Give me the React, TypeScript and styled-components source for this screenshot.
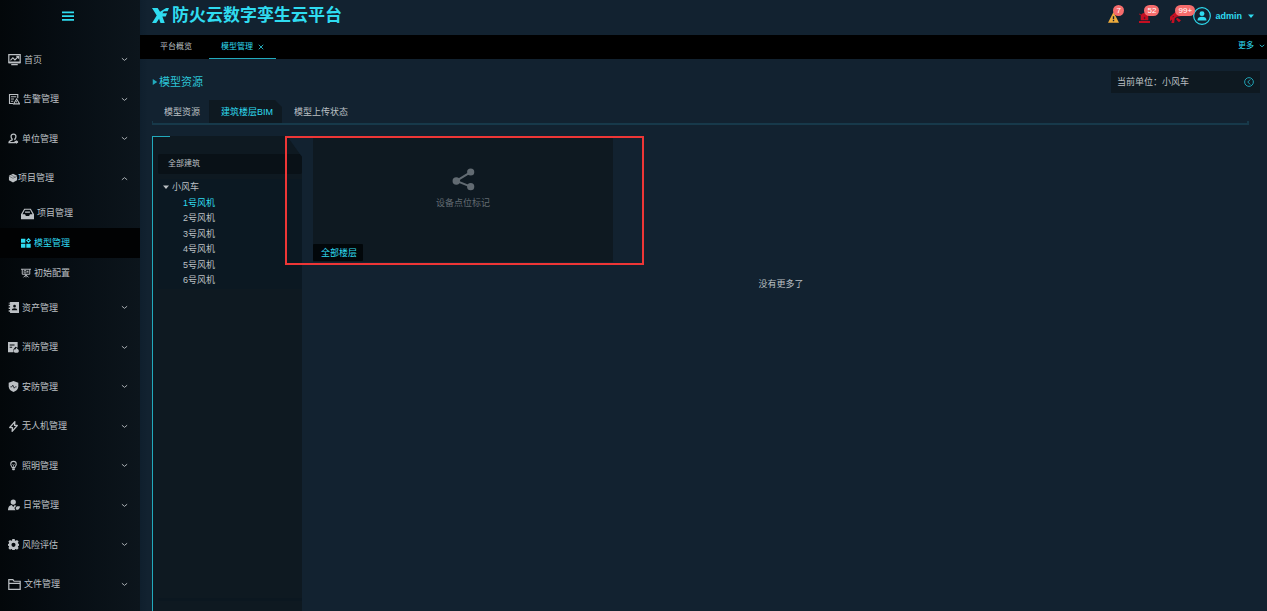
import React from "react";
import styled, { createGlobalStyle, css } from "styled-components";

const color = {
  page: "#122230",
  bar: "#000000",
  panel: "#0e1921",
  cyan: "#2fdcf0",
  cyanDim: "#22aabc",
  line: "#17394a",
  text: "#bcc0c4",
  muted: "#626b72",
  badge: "#f56c6c",
};

const GlobalStyle = createGlobalStyle`
  * { box-sizing: border-box; }
  body {
    margin: 0;
    background: ${color.page};
    color: ${color.text};
    font-family: "Liberation Sans", "Noto Sans CJK SC", sans-serif;
    font-size: 9px;
    line-height: 16px;
  }
  ul { list-style: none; margin: 0; padding: 0; }
  h1, h2, p { margin: 0; }
  button {
    border: 0;
    padding: 0;
    margin: 0;
    background: none;
    color: inherit;
    font: inherit;
    text-align: left;
    cursor: pointer;
    white-space: nowrap;
  }
  svg { display: block; flex: none; }
`;

/* ---------- icons ---------- */

type IconName = keyof typeof shapes;

const shapes = {
  monitor: (
    <>
      <path d="M1 2h14v10H1z" fill="none" stroke="currentColor" strokeWidth="1.5" />
      <path d="M3 9l3-3 2.500 2.500L13 4M10 4h3v3" fill="none" stroke="currentColor" strokeWidth="1.400" />
      <path d="M1 10.500h14v2H1zM4 13.500h8v1.500H4z" />
    </>
  ),
  alarmDoc: (
    <>
      <path d="M13 7V2H2v12h5" fill="none" stroke="currentColor" strokeWidth="1.500" />
      <path d="M4 5h7M4 8h4M4 11h3" fill="none" stroke="currentColor" strokeWidth="1.300" />
      <path d="M11.500 8l4 6.500h-8z" fill="none" stroke="currentColor" strokeWidth="1.400" />
      <path d="M11 10.500h1v2h-1z" />
    </>
  ),
  person: (
    <>
      <path
        d="M8 1.500c-2.500 0-3.700 1.800-3.500 4 .1 1.600.8 2.600 1.500 3.300v1.200c-2.500.8-4.500 1.800-4.500 4h9M8 1.500c2.500 0 3.700 1.800 3.500 4-.1 1.600-.8 2.600-1.500 3.300v1.200"
        fill="none"
        stroke="currentColor"
        strokeWidth="1.900"
      />
      <path d="M12 10l1 1.500 2-.2-.9 1.700.9 1.700-2-.2-1 1.500-1-1.500-2 .2.900-1.700-.9-1.700 2 .2z" />
    </>
  ),
  cube: (
    <>
      <path d="M8 1l6.500 3.500v7L8 15l-6.500-3.500v-7z" />
      <path d="M1.500 5L8 8.500 14.500 5M4 2.500l8 4.500" fill="none" stroke="#060c11" strokeWidth=".6" />
    </>
  ),
  inbox: (
    <path
      fillRule="evenodd"
      d="M4 2h8l4 7v6H0V9zM4.800 3.500L1.800 9H5l1 2h4l1-2h3.200l-3-5.500zM5 5.500h6V7H5z"
    />
  ),
  blocks: (
    <>
      <path d="M0 1h7v6.500H0zM0 9h7v6.500H0zM8.500 9h7v6.500h-7z" />
      <path d="M12 1.200L14.800 4 12 6.800 9.200 4z" fill="none" stroke="currentColor" strokeWidth="1.700" />
    </>
  ),
  board: (
    <>
      <path d="M0 2h16M2 2v8h12V2M8 10v5M4 15l4-4 4 4" fill="none" stroke="currentColor" strokeWidth="1.500" />
      <path d="M5 4v4M5 4h3v4H5M11 4v4M9.500 5.500h2" fill="none" stroke="currentColor" strokeWidth="1.200" />
    </>
  ),
  contact: (
    <path
      fillRule="evenodd"
      d="M3 0h13v16H3v-2H1v-2h2v-2H1V8h2V6H1V4h2V2H1V1h2zM9.500 4a2 2 0 1 0 0 4 2 2 0 0 0 0-4zM5.500 12h8c0-2-1.500-3-4-3s-4 1-4 3z"
    />
  ),
  fireDoc: (
    <>
      <path fillRule="evenodd" d="M0 0h14v8.500L11 7l-3 3.500V15H0zM2.500 3.500V5h7V3.500zM2.500 7v1.500H6V7z" />
      <path d="M12 8c.5 1.500 3.800 2.500 3.800 5 0 1.800-1.600 2.800-3.800 2.800s-3.700-1-3.700-2.800c0-1.500 1-2 1.500-3l1 1z" />
    </>
  ),
  shield: (
    <>
      <path d="M8 0l7 2.500V8c0 4-3 6.500-7 8-4-1.500-7-4-7-8V2.500z" />
      <path d="M3.500 8.500h2L7 6l2 4.500 1.500-2h2" fill="none" stroke="#0a1016" strokeWidth="1.100" />
    </>
  ),
  bolt: (
    <path
      d="M10 1L2.500 9.500h4L6 15l7.500-8.500h-4z"
      fill="none"
      stroke="currentColor"
      strokeWidth="1.900"
      strokeLinejoin="round"
    />
  ),
  bulb: (
    <>
      <path d="M6 11c0-1.500-2-2.500-2-5a4 4 0 0 1 8 0c0 2.500-2 3.500-2 5z" fill="none" stroke="currentColor" strokeWidth="1.500" />
      <path d="M6.500 6L8 8l1.500-2M8 8v3" fill="none" stroke="currentColor" />
      <path d="M6 12h4v2l-1 1H7l-1-1z" />
    </>
  ),
  worker: (
    <>
      <circle cx="7" cy="4" r="3.500" />
      <path d="M0 15c0-4 1.500-6.500 5-7l2 2.500L9 8l2 1-2.500 3L10 15z" />
      <path d="M10 12c1.500-3 4-2.500 6-2-.3 3-2 4.500-4.500 4.500z" />
    </>
  ),
  gear: (
    <path
      fillRule="evenodd"
      d="M6.300 0h3.400l.4 2.100 1.200.5 1.800-1.200 2.400 2.400-1.200 1.800.5 1.200 2.100.4v2.600l-2.100.4-.5 1.200 1.200 1.800-2.400 2.400-1.800-1.200-1.200.5-.4 2.100H6.300l-.4-2.100-1.200-.5-1.800 1.200L.5 13.200l1.200-1.800-.5-1.200L0 9.800V7.200l1.200-.4.5-1.200L.5 3.800l2.400-2.400 1.800 1.200 1.200-.5zM8 5.500a3 3 0 1 0 0 6 3 3 0 0 0 0-6z"
    />
  ),
  folder: (
    <path d="M1 2h5l1.500 2H15v10H1zM1 6.500h14" fill="none" stroke="currentColor" strokeWidth="1.500" />
  ),
  share: (
    <>
      <circle cx="3" cy="9" r="2.600" />
      <circle cx="13" cy="2.800" r="2.500" />
      <circle cx="13" cy="13" r="2.500" />
      <path d="M3 9l10-6.200M3 9l10 4" stroke="currentColor" strokeWidth="1.400" />
    </>
  ),
  warning: (
    <path fillRule="evenodd" d="M8 0l8 15.500H0zM7 6v4.500h2V6zM7 11.500v2h2v-2z" />
  ),
  siren: (
    <path
      fillRule="evenodd"
      d="M2.500 12V7a5.500 5.500 0 0 1 11 0v5zM0 13h16v3H0zM8 6.500L6.500 9H8v2l1.700-2.800H8zM0 3l1-1 2 2-1 1zM13 4l2-2 1 1-2 2z"
    />
  ),
  extinguisher: (
    <path
      fillRule="evenodd"
      d="M0 7l8-7 8 2-1 4-5 1-3 2-1 7H2l1-5-3 2zM4 6v2l2-1.500zM10 8l6 4-3 3-4-4z"
    />
  ),
  chevron: <path d="M2 5l6 5 6-5" fill="none" stroke="currentColor" strokeWidth="2" />,
  caret: <path d="M0 4h16l-8 9z" />,
  triangle: <path d="M2 0l12 8-12 8z" />,
  cross: <path d="M2 2l12 12M14 2L2 14" stroke="currentColor" strokeWidth="2" />,
  collapse: (
    <>
      <circle cx="8" cy="8" r="7" fill="none" stroke="currentColor" strokeWidth="1.500" />
      <path d="M10 4L6 8l4 4" fill="none" stroke="currentColor" strokeWidth="1.500" />
    </>
  ),
  user: (
    <>
      <circle cx="8" cy="8" r="7.400" fill="none" stroke="currentColor" strokeWidth="1" />
      <circle cx="8" cy="5.900" r="2.200" />
      <path d="M4 12c0-2.500 1.500-3.300 4-3.300s4 .8 4 3.300z" />
    </>
  ),
  menu: <path d="M0 2h16v2.200H0zM0 7h16v2.200H0zM0 12h16v2.200H0z" />,
  logo: (
    <>
      <path d="M0 0h6l2.500 4L15 0h3l-1.500 3.500h-4L11 5.500h5L14.500 9H11l2.500 7H9L7.500 11.500 4.500 16H0l5-8z" />
    </>
  ),
};

const Icon = ({ name, size, flip }: { name: IconName; size: number; flip?: boolean }) => (
  <svg
    width={size}
    height={size}
    viewBox={name === "logo" ? "0 0 18 16" : "0 0 16 16"}
    fill="currentColor"
    aria-hidden="true"
  >
    <g transform={flip ? "rotate(180 8 8)" : undefined}>{shapes[name]}</g>
  </svg>
);

/* ---------- side menu ---------- */

const Shell = styled.div`
  display: grid;
  grid-template-columns: 140px minmax(0, 1fr);
  min-height: 100vh;
`;

const Sidebar = styled.nav`
  background: linear-gradient(90deg, #03070a 0%, #070e14 50%, #0c151c 100%);
`;

const MenuToggle = styled.button`
  display: flex;
  align-items: center;
  justify-content: center;
  width: 136px;
  height: 32px;
  margin-bottom: 8px;
  color: ${color.cyan};
`;

const MenuButton = styled.button<{ $tight?: boolean }>`
  display: flex;
  align-items: center;
  gap: ${(p) => (p.$tight ? 0 : 3)}px;
  width: 100%;
  height: 39px;
  padding: 0 12px 0 8px;
`;

const MenuItem = styled.li`
  &:nth-child(even) > ${MenuButton} {
    height: 40px;
  }
`;

const MenuLabel = styled.span`
  flex: 1;
`;

const SubButton = styled.button<{ $active?: boolean }>`
  display: flex;
  align-items: center;
  gap: 3px;
  width: 100%;
  height: 30px;
  padding-left: 21px;
  ${(p) =>
    p.$active &&
    css`
      background: #010203;
      color: ${color.cyan};
    `}
`;

type Entry = { label: string; icon: IconName; size: number; children?: Entry[] };

const menu: Entry[] = [
  { label: "首页", icon: "monitor", size: 13 },
  { label: "告警管理", icon: "alarmDoc", size: 12 },
  { label: "单位管理", icon: "person", size: 11 },
  {
    label: "项目管理",
    icon: "cube",
    size: 10,
    children: [
      { label: "项目管理", icon: "inbox", size: 13 },
      { label: "模型管理", icon: "blocks", size: 10 },
      { label: "初始配置", icon: "board", size: 10 },
    ],
  },
  { label: "资产管理", icon: "contact", size: 11 },
  { label: "消防管理", icon: "fireDoc", size: 11 },
  { label: "安防管理", icon: "shield", size: 11 },
  { label: "无人机管理", icon: "bolt", size: 11 },
  { label: "照明管理", icon: "bulb", size: 11 },
  { label: "日常管理", icon: "worker", size: 12 },
  { label: "风险评估", icon: "gear", size: 11 },
  { label: "文件管理", icon: "folder", size: 13 },
];

const SideMenu = () => (
  <Sidebar aria-label="主菜单">
    <MenuToggle aria-label="收起菜单">
      <Icon name="menu" size={12} />
    </MenuToggle>
    <ul>
      {menu.map((item) => (
        <MenuItem key={item.label}>
          <MenuButton $tight={!!item.children} aria-expanded={!!item.children}>
            <Icon name={item.icon} size={item.size} />
            <MenuLabel>{item.label}</MenuLabel>
            <Icon name="chevron" size={7} flip={!!item.children} />
          </MenuButton>
          {item.children && (
            <ul>
              {item.children.map((sub) => (
                <li key={sub.label}>
                  <SubButton $active={sub.label === "模型管理"}>
                    <Icon name={sub.icon} size={sub.size} />
                    {sub.label}
                  </SubButton>
                </li>
              ))}
            </ul>
          )}
        </MenuItem>
      ))}
    </ul>
  </Sidebar>
);

/* ---------- top bars ---------- */

const Page = styled.div`
  display: flex;
  flex-direction: column;
  min-width: 0;
  background: linear-gradient(90deg, #0f1f2d 0, ${color.page} 8px);
`;

const Header = styled.header`
  display: flex;
  align-items: center;
  justify-content: space-between;
  height: 35px;
  padding: 0 13px 4px 12px;
`;

const Brand = styled.div`
  display: flex;
  align-items: center;
  gap: 3px;
  color: ${color.cyan};
`;

const BrandName = styled.h1`
  font-size: 17px;
  line-height: 24px;
  font-weight: 700;
  white-space: nowrap;
`;

const HeaderTools = styled.div`
  display: flex;
  align-items: center;
  gap: 12px;
`;

const Notices = styled.div`
  display: flex;
  gap: 20px;
`;

const Notice = styled.button<{ $tint: string }>`
  position: relative;
  padding-top: 4px;
  color: ${(p) => p.$tint};
`;

const Badge = styled.span`
  position: absolute;
  left: 5px;
  top: -3px;
  min-width: 10px;
  height: 11px;
  padding: 0 3px;
  border-radius: 6px;
  background: ${color.badge};
  color: #fff;
  font-size: 8px;
  line-height: 11px;
  text-align: center;
`;

const UserButton = styled.button`
  display: flex;
  align-items: center;
  gap: 4px;
  color: ${color.cyan};
  font-weight: 700;
`;

const UserName = styled.span`
  margin-right: 2px;
`;

const TabBar = styled.nav`
  display: flex;
  align-items: stretch;
  height: 24px;
  padding: 0 2px 0 8px;
  background: ${color.bar};
  font-size: 8px;
`;

const PageTab = styled.button<{ $active?: boolean }>`
  display: flex;
  align-items: center;
  gap: 5px;
  padding: 0 12px;
  border-bottom: 1px solid transparent;
  ${(p) =>
    p.$active &&
    css`
      color: ${color.cyan};
      border-color: ${color.cyanDim};
    `}

  &:first-child {
    margin-right: 5px;
  }
`;

const More = styled.button`
  display: flex;
  align-items: center;
  gap: 5px;
  margin-left: auto;
  padding-bottom: 3px;
  color: ${color.cyan};
`;

/* ---------- content ---------- */

const Content = styled.main`
  display: flex;
  flex-direction: column;
  flex: 1;
  padding: 11px 7px 0 12px;
`;

const TitleRow = styled.div`
  display: flex;
  align-items: center;
  justify-content: space-between;
  height: 23px;
`;

const Title = styled.h2`
  display: flex;
  align-items: center;
  gap: 1px;
  color: ${color.cyanDim};
  font-size: 11px;
  font-weight: 400;
`;

const TitleText = styled.span`
  color: #2cc4d6;
`;

const UnitBox = styled.div`
  display: flex;
  align-items: center;
  justify-content: space-between;
  width: 149px;
  height: 22px;
  padding: 0 6px;
  background: ${color.panel};
`;

const Collapse = styled.button`
  color: ${color.cyanDim};
`;

const SubTabs = styled.div`
  display: flex;
  height: 32px;
  margin: 0 11px 11px 0;
  padding: 7px 0 2px;
  background:
    linear-gradient(${color.line}, ${color.line}) 0 100% / 1px 4px no-repeat,
    linear-gradient(${color.line}, ${color.line}) 100% 100% / 2px 4px no-repeat,
    linear-gradient(${color.line}, ${color.line}) 0 100% / 100% 2px no-repeat;
`;

const SubTab = styled.button<{ $active?: boolean }>`
  padding: 0 9px 0 12px;
  ${(p) =>
    p.$active &&
    css`
      background: ${color.panel};
      color: ${color.cyan};
      clip-path: polygon(0 0, calc(100% - 7px) 0, 100% 7px, 100% 100%, 0 100%);
    `}
`;

const Workspace = styled.div`
  display: flex;
  flex: 1;
  gap: 11px;
  margin-right: 11px;
`;

const Panel = styled.aside`
  display: flex;
  flex-direction: column;
  width: 150px;
  padding: 18px 0 10px 5px;
  border-left: 1px solid ${color.cyanDim};
  background:
    linear-gradient(${color.cyanDim}, ${color.cyanDim}) 0 0 / 17px 1px no-repeat,
    ${color.panel};
  clip-path: polygon(0 0, calc(100% - 15px) 0, 100% 21px, 100% 100%, 0 100%);
`;

const PanelHeading = styled.button`
  height: 20px;
  margin-bottom: 5px;
  padding-left: 10px;
  border-radius: 2px;
  background: #091117;
  font-size: 8px;
`;

const Tree = styled.div`
  padding-bottom: 1px;
  background: #0b1822;
`;

const TreeRoot = styled.button`
  display: flex;
  align-items: center;
  gap: 3px;
  width: 100%;
  padding-left: 5px;
`;

const TreeLeaf = styled.button<{ $active?: boolean }>`
  display: block;
  width: 100%;
  height: 16px;
  padding-left: 25px;
  color: ${(p) => (p.$active ? color.cyan : "inherit")};

  li:nth-child(odd) > & {
    height: 15px;
  }
`;

const PanelFoot = styled.div`
  height: 3px;
  margin-top: auto;
  background: #0b1720;
`;

const Gallery = styled.section`
  position: relative;
  flex: 1;
`;

const FloorCard = styled.article`
  position: relative;
  display: flex;
  flex-direction: column;
  align-items: center;
  width: 300px;
  height: 126px;
  padding-top: 32px;
  background: ${color.panel};
  color: ${color.muted};
`;

const CardCaption = styled.p`
  margin-top: 4px;
`;

const CardTag = styled.button`
  position: absolute;
  left: 0;
  bottom: 1px;
  height: 17px;
  padding: 0 6px 0 8px;
  border-radius: 1px;
  background: #02070a;
  color: ${color.cyan};
`;

const Highlight = styled.div`
  position: absolute;
  top: 0;
  left: -28px;
  width: 359px;
  height: 129px;
  border: 2px solid #ee3636;
  pointer-events: none;
`;

const Empty = styled.p`
  margin-top: 14px;
  text-align: center;
`;

const turbines = [1, 2, 3, 4, 5, 6];

export default function App() {
  return (
    <>
      <GlobalStyle />
      <Shell>
        <SideMenu />
        <Page>
          <Header>
            <Brand>
              <Icon name="logo" size={17} />
              <BrandName>防火云数字孪生云平台</BrandName>
            </Brand>
            <HeaderTools>
              <Notices>
                <Notice $tint="#f0ad3c" aria-label="预警">
                  <Icon name="warning" size={11} />
                  <Badge>7</Badge>
                </Notice>
                <Notice $tint="#c50f22" aria-label="报警">
                  <Icon name="siren" size={11} />
                  <Badge>52</Badge>
                </Notice>
                <Notice $tint="#c50f22" aria-label="火警">
                  <Icon name="extinguisher" size={11} />
                  <Badge>99+</Badge>
                </Notice>
              </Notices>
              <UserButton>
                <Icon name="user" size={18} />
                <UserName>admin</UserName>
                <Icon name="caret" size={6} />
              </UserButton>
            </HeaderTools>
          </Header>
          <TabBar>
            <PageTab>平台概览</PageTab>
            <PageTab $active>
              模型管理
              <Icon name="cross" size={6} />
            </PageTab>
            <More>
              更多
              <Icon name="chevron" size={6} />
            </More>
          </TabBar>
          <Content>
            <TitleRow>
              <Title>
                <Icon name="triangle" size={6} />
                <TitleText>模型资源</TitleText>
              </Title>
              <UnitBox>
                当前单位：小风车
                <Collapse aria-label="收起">
                  <Icon name="collapse" size={10} />
                </Collapse>
              </UnitBox>
            </TitleRow>
            <SubTabs>
              <SubTab>模型资源</SubTab>
              <SubTab $active>建筑楼层BIM</SubTab>
              <SubTab>模型上传状态</SubTab>
            </SubTabs>
            <Workspace>
              <Panel>
                <PanelHeading>全部建筑</PanelHeading>
                <Tree>
                  <TreeRoot aria-expanded>
                    <Icon name="caret" size={6} />
                    小风车
                  </TreeRoot>
                  <ul>
                    {turbines.map((n) => (
                      <li key={n}>
                        <TreeLeaf $active={n === 1}>{n}号风机</TreeLeaf>
                      </li>
                    ))}
                  </ul>
                </Tree>
                <PanelFoot />
              </Panel>
              <Gallery>
                <FloorCard>
                  <Icon name="share" size={23} />
                  <CardCaption>设备点位标记</CardCaption>
                  <CardTag>全部楼层</CardTag>
                </FloorCard>
                <Empty>没有更多了</Empty>
                <Highlight />
              </Gallery>
            </Workspace>
          </Content>
        </Page>
      </Shell>
    </>
  );
}
